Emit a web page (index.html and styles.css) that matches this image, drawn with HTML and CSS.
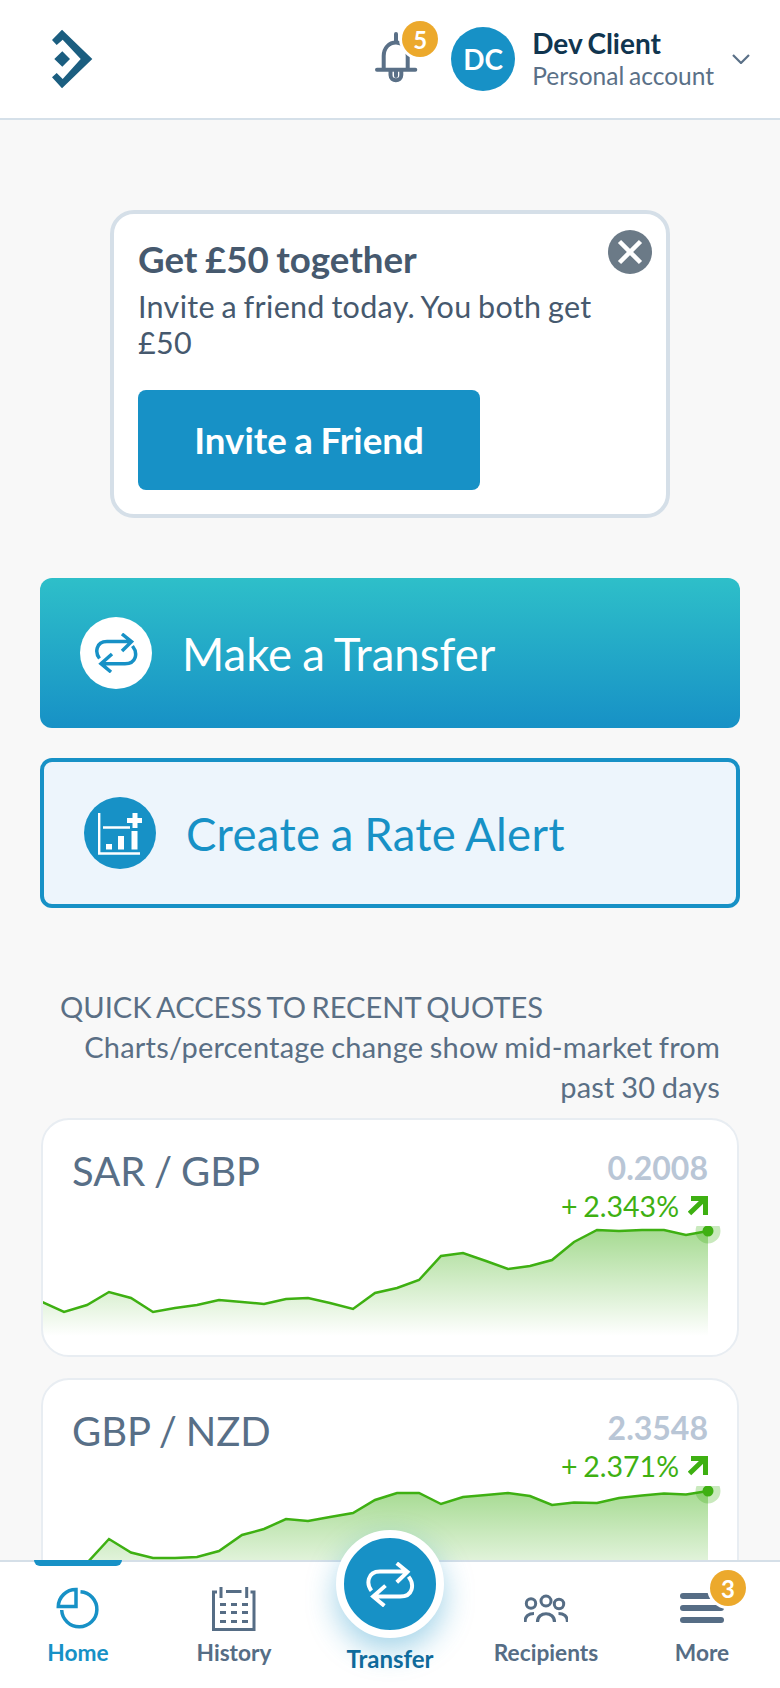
FILE: index.html
```html
<!DOCTYPE html>
<html lang="en">
<head>
<meta charset="utf-8">
<title>Dashboard</title>
<link rel="stylesheet" href="styles.css">
</head>
<body>
<svg class="defs" width="0" height="0" aria-hidden="true">
  <defs>
    <symbol id="swap" viewBox="0 0 44 40">
      <path d="M5.5 25.5C1 20 1.5 8.5 13 8.5H37M28 1L37.5 8.7L28 18M38.5 13C44 20 42.500 30.700 31 30.700H7M18 21L7 30.700L17 39" fill="none" stroke="currentColor" stroke-width="3.500"/>
    </symbol>
    <linearGradient id="area" x1="0" y1="0" x2="0" y2="1">
      <stop offset="0" stop-color="#3eb012" stop-opacity=".46"/>
      <stop offset="1" stop-color="#3eb012" stop-opacity="0"/>
    </linearGradient>
  </defs>
</svg>
<div class="app">
  <header class="topbar">
    <svg class="logo" viewBox="52 30 41 60">
      <path d="M62 30.700L92.300 60L62 89.300L52 78.300L56.700 74L62.700 80L80.700 60L62.700 40.700L56.700 46L52 41Z M62.300 52.300L70 60L62.300 67.700L54.300 60Z" fill="#1b5e80"/>
    </svg>
    <div class="bell">
      <svg class="bell-icon" viewBox="372 32 44 54">
        <path d="M394 35V43.500C387 43.500 381.700 49 381.700 57V70M405.700 70V57C405.700 49 400 43.500 394 43.500M375 70.700H413.300M388.500 71V76C388.500 83 399.300 83 399.300 76V71M394 72V77" fill="none" stroke="#5a7087" stroke-width="4" stroke-linecap="round"/>
      </svg>
      <span class="badge bell-badge">5</span>
    </div>
    <div class="avatar">DC</div>
    <div class="who">
      <div class="who-name">Dev Client</div>
      <div class="who-sub">Personal account</div>
    </div>
    <svg class="chevron" viewBox="0 0 18 10"><path d="M1 1L9 9L17 1" fill="none" stroke="#5a7087" stroke-width="2.200"/></svg>
  </header>

  <main class="content">
    <section class="promo">
      <div class="promo-close"><svg viewBox="0 0 44 44"><path d="M11.500 11.500L32.500 32.500M32.500 11.500L11.500 32.500" stroke="#fff" stroke-width="4.500" fill="none"/></svg></div>
      <h2 class="promo-title">Get £50 together</h2>
      <p class="promo-text">Invite a friend today. You both get £50</p>
      <div class="promo-btn">Invite a Friend</div>
    </section>

    <div class="action action-primary">
      <span class="action-circle circle-white"><svg class="swap-md"><use href="#swap"/></svg></span>
      <span class="action-label">Make a Transfer</span>
    </div>
    <div class="action action-outline">
      <span class="action-circle circle-blue">
        <svg class="alert-icon" viewBox="98 812 44 44">
          <path d="M99.200 814V854.500H140M103 828.500H130" fill="none" stroke="#fff" stroke-width="2.400"/>
          <path d="M106 845h6v5.500h-6zM118 837h6v13.500h-6zM131.500 832h6v18.500h-6zM132.500 814h5v5h5.500v5h-5.500v5h-5v-5h-5.500v-5h5.500z" fill="#fff"/>
        </svg>
      </span>
      <span class="action-label">Create a Rate Alert</span>
    </div>

    <h3 class="quick-title">QUICK ACCESS TO RECENT QUOTES</h3>
    <p class="quick-note">Charts/percentage change show mid-market from past 30 days</p>

    <article class="quote">
      <div class="quote-head">
        <div class="quote-pair">SAR / GBP</div>
        <div class="quote-data">
          <div class="quote-rate">0.2008</div>
          <div class="quote-change">+ 2.343% <svg class="up" viewBox="0 0 20 20"><path d="M1.500 17.500L16 3.500M3 2.500H17.500V19" fill="none" stroke="#3eb012" stroke-width="5"/></svg></div>
        </div>
      </div>
      <svg class="chart" viewBox="0 0 694 130">
        <polygon fill="url(#area)" points="-1,76 21,86 44,79 66,66 88,72 110,86 132,82 154,79 176,74 199,76 221,78 243,73 265,72 287,77 310,83 332,67 354,62 376,54 398,30 420,27 443,35 465,43 487,40 509,34 531,16 554,4 576,5 599,4 621,4 643,9 665,5 665,110 -1,110" />
        <polyline class="chart-line" points="-1,76 21,86 44,79 66,66 88,72 110,86 132,82 154,79 176,74 199,76 221,78 243,73 265,72 287,77 310,83 332,67 354,62 376,54 398,30 420,27 443,35 465,43 487,40 509,34 531,16 554,4 576,5 599,4 621,4 643,9 665,5"/>
        <circle class="chart-halo" cx="665" cy="5" r="12.500"/>
        <circle class="chart-dot" cx="665" cy="5" r="5.500"/>
      </svg>
    </article>

    <article class="quote">
      <div class="quote-head">
        <div class="quote-pair">GBP / NZD</div>
        <div class="quote-data">
          <div class="quote-rate">2.3548</div>
          <div class="quote-change">+ 2.371% <svg class="up" viewBox="0 0 20 20"><path d="M1.500 17.500L16 3.500M3 2.500H17.500V19" fill="none" stroke="#3eb012" stroke-width="5"/></svg></div>
        </div>
      </div>
      <svg class="chart" viewBox="0 0 694 130">
        <polygon fill="url(#area)" points="-1,105 21,105 44,77 66,53 88,66.500 110,72 132,72 154,71 176,65 199,49 221,43 243,33 265,35 287,31 310,27 332,14 354,7 376,7 398,18 420,11 443,9 465,7 487,10 509,19 531,16.500 554,17 576,12 599,9.500 621,7.500 643,8.500 665,5 665,110 -1,110" />
        <polyline class="chart-line" points="-1,105 21,105 44,77 66,53 88,66.500 110,72 132,72 154,71 176,65 199,49 221,43 243,33 265,35 287,31 310,27 332,14 354,7 376,7 398,18 420,11 443,9 465,7 487,10 509,19 531,16.500 554,17 576,12 599,9.500 621,7.500 643,8.500 665,5"/>
        <circle class="chart-halo" cx="665" cy="5" r="12.500"/>
        <circle class="chart-dot" cx="665" cy="5" r="5.500"/>
      </svg>
    </article>
  </main>

  <nav class="tabbar">
    <div class="tab tab-active">
      <span class="tab-marker"></span>
      <svg class="tab-icon" viewBox="0 0 44 44">
        <path d="M24.500 4.700A17.600 17.600 0 1 1 5.700 23" fill="none" stroke="currentColor" stroke-width="3.500"/>
        <path d="M20 2.500V19.500H2.300A17.500 17.500 0 0 1 20 2.500Z" fill="none" stroke="currentColor" stroke-width="3.500"/>
      </svg>
      <span class="tab-label">Home</span>
    </div>
    <div class="tab">
      <svg class="tab-icon" viewBox="212 1587 44 44">
        <path d="M217 1592H213.500V1629.500H254V1592H250.500M221 1587V1598M246.700 1587V1598M226 1591.500H241.500" fill="none" stroke="currentColor" stroke-width="3"/>
        <path d="M220 1603h6v3h-6zM231 1603h6v3h-6zM242 1603h6v3h-6zM220 1611h6v3h-6zM231 1611h6v3h-6zM242 1611h6v3h-6zM220 1620h6v3h-6zM231 1620h6v3h-6zM242 1620h6v3h-6z" fill="currentColor"/>
      </svg>
      <span class="tab-label">History</span>
    </div>
    <div class="tab tab-center">
      <span class="fab"><svg class="swap-lg"><use href="#swap"/></svg></span>
      <span class="tab-label tab-label-center">Transfer</span>
    </div>
    <div class="tab">
      <svg class="tab-icon" viewBox="524 1587 44 44">
        <circle cx="531" cy="1603.500" r="4.700" fill="none" stroke="currentColor" stroke-width="3"/>
        <circle cx="546" cy="1601" r="5" fill="none" stroke="currentColor" stroke-width="3"/>
        <circle cx="559" cy="1604" r="4.700" fill="none" stroke="currentColor" stroke-width="3"/>
        <path d="M525 1622C525 1616 529 1613.500 534 1613.500M537.500 1622C537.500 1611 554.500 1611 554.500 1622M567.500 1622C567.500 1616 563.500 1613.500 558.500 1613.500" fill="none" stroke="currentColor" stroke-width="3.200"/>
      </svg>
      <span class="tab-label">Recipients</span>
    </div>
    <div class="tab">
      <div class="more-icon">
        <span class="more-bar"></span><span class="more-bar"></span><span class="more-bar"></span>
        <span class="badge more-badge">3</span>
      </div>
      <span class="tab-label">More</span>
    </div>
  </nav>
</div>
</body>
</html>
```

FILE: styles.css
```css
* { box-sizing: border-box; }
html, body { margin: 0; height: 100%; }
body { font-family: Lato, "Noto Sans", sans-serif; color: #46596e; background: #fff; overflow: hidden; word-spacing: -.09em; }
.defs { position: absolute; }
.app { height: 1688px; display: flex; flex-direction: column; }

.topbar { height: 120px; flex: none; background: #fff; border-bottom: 2px solid #d5e0e9; display: flex; align-items: center; padding: 0 30px 0 52px; }
.logo { width: 41px; height: 60px; }
.bell { margin-left: auto; width: 44px; height: 54px; position: relative; margin-top: -2px; margin-right: 33px; }
.bell-icon { width: 44px; height: 54px; display: block; }
.badge { position: absolute; width: 36px; height: 36px; border-radius: 50%; background: #eca92c; color: #fff; font-size: 24px; font-weight: 700; display: flex; align-items: center; justify-content: center; box-shadow: 0 0 0 3px #fff; }
.bell-badge { left: 28px; top: -10px; }
.avatar { width: 64px; height: 64px; border-radius: 50%; background: #1791c6; color: #fff; font-size: 28px; font-weight: 700; display: flex; align-items: center; justify-content: center; }
.who { margin-left: 17px; margin-right: 18px; }
.who-name { font-size: 28px; font-weight: 700; color: #10354f; line-height: 34px; }
.who-sub { font-size: 24.500px; color: #5a7087; line-height: 32px; }
.chevron { width: 18px; height: 10px; }

.content { flex: 1; min-height: 0; overflow: hidden; background: #f8f8f8; padding: 90px 40px 0; }
.promo { position: relative; width: 560px; height: 308px; margin: 0 auto 60px; background: #fff; border: 4px solid #d5dfe8; border-radius: 24px; padding: 23px 24px 0; }
.promo-close { position: absolute; right: 14px; top: 16px; width: 44px; height: 44px; border-radius: 50%; background: #6b7a87; }
.promo-close svg { display: block; width: 44px; height: 44px; }
.promo-title { margin: 0; font-size: 36.700px; font-weight: 700; line-height: 44px; color: #46596e; }
.promo-text { margin: 7px 0 0; font-size: 30.500px; line-height: 36px; letter-spacing: .3px; width: 480px; color: #46596e; }
.promo-btn { margin-top: 30px; width: 342px; height: 100px; border-radius: 8px; background: #1791c6; color: #fff; font-size: 36.700px; font-weight: 700; display: flex; align-items: center; justify-content: center; }

.action { height: 150px; border-radius: 12px; display: flex; align-items: center; margin-bottom: 30px; }
.action-primary { background: linear-gradient(#2ebfc9, #1791c6); color: #fff; padding-left: 40px; }
.action-outline { background: #edf5fc; border: 4px solid #1791c6; color: #1791c6; padding-left: 40px; }
.action-circle { width: 72px; height: 72px; border-radius: 50%; display: flex; align-items: center; justify-content: center; flex: none; margin-right: 30px; }
.circle-white { background: #fff; color: #1791c6; }
.circle-blue { background: #1791c6; }
.swap-md { width: 44px; height: 40px; }
.alert-icon { width: 44px; height: 44px; }
.action-label { font-size: 45.500px; }
.action-outline .action-label { letter-spacing: .3px; }

.quick-title { margin: 79px 0 0 20px; font-size: 29.100px; font-weight: 400; line-height: 40px; color: #5a6f85; word-spacing: -.07em; }
.quick-note { margin: 0 20px 0 40px; font-size: 29px; line-height: 40px; letter-spacing: .2px; text-align: right; color: #5a6f85; word-spacing: -.04em; }

.quote { margin: 11px 1px 21px; height: 239px; background: #fff; border: 2px solid #e8edf2; border-radius: 28px; overflow: hidden; }
.quote-head { height: 106px; display: flex; justify-content: space-between; padding: 24px 29px 0; }
.quote-pair { font-size: 40px; line-height: 50px; padding-top: 2px; color: #586f87; }
.quote-data { text-align: right; }
.quote-rate { font-size: 32px; font-weight: 700; line-height: 40px; padding-top: 4px; color: #b9c6d6; }
.quote-change { font-size: 28.500px; line-height: 36px; color: #3eb012; display: flex; align-items: center; gap: 9px; }
.up { width: 20px; height: 20px; }
.chart { display: block; width: 694px; height: 130px; }
.chart-line { fill: none; stroke: #3eb012; stroke-width: 2.500; }
.chart-halo { fill: #3eb012; fill-opacity: .28; }
.chart-dot { fill: #3eb012; }
.quote + .quote { margin-top: 0; }

.tabbar { height: 128px; flex: none; background: #fff; border-top: 2px solid #d5dfe8; display: grid; grid-template-columns: repeat(5, 156px); position: relative; z-index: 1; }
.tab { position: relative; display: flex; flex-direction: column; align-items: center; padding-top: 25px; color: #566d85; }
.tab-active { color: #1791c6; }
.tab-marker { position: absolute; left: 34px; top: -2px; width: 88px; height: 6px; background: #1791c6; border-radius: 0 0 7px 7px; }
.tab-icon { width: 44px; height: 44px; display: block; }
.tab-label { font-size: 22.700px; font-weight: 700; line-height: 30px; margin-top: 7px; }
.tab-center { color: #10699a; padding-top: 0; }
.tab-label-center { margin-top: 82px; font-size: 24px; }
.fab { position: absolute; left: 24px; top: -32px; width: 108px; height: 108px; border-radius: 50%; background: #1791c6; border: 8px solid #fff; box-shadow: 0 12px 30px rgba(23, 145, 198, .4); display: flex; align-items: center; justify-content: center; color: #fff; }
.swap-lg { width: 50px; height: 45px; }
.more-icon { position: relative; width: 44px; height: 44px; display: flex; flex-direction: column; gap: 6px; padding-top: 6px; }
.more-bar { display: block; height: 6px; border-radius: 3px; background: #566d85; }
.more-badge { left: 30px; top: -17px; }
```
